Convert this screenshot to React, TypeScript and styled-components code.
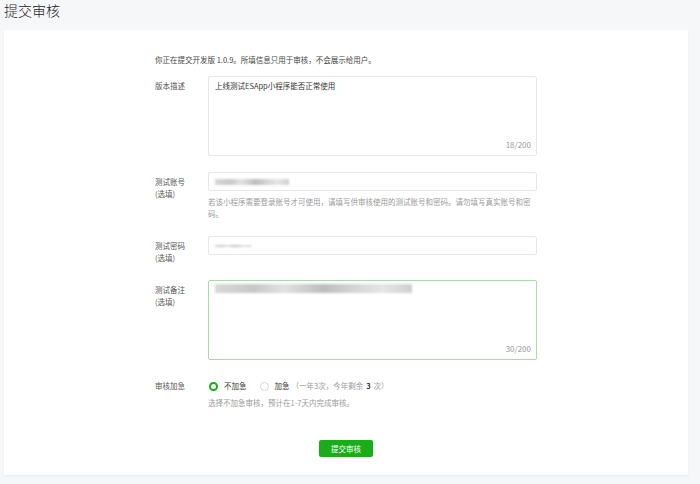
import React from "react";
import styled, { createGlobalStyle } from "styled-components";

const GlobalStyle = createGlobalStyle`
  html, body {
    margin: 0;
    padding: 0;
    background: #f6f7f9;
  }
  body {
    font-family: "Noto Sans CJK SC", "Liberation Sans", sans-serif;
    color: #353535;
  }
`;

const Page = styled.div`
  width: 700px;
  height: 484px;
  box-sizing: border-box;
  padding: 0 12px 9px 4px;
  display: flex;
  flex-direction: column;
`;

const Title = styled.h2`
  margin: 0;
  height: 30px;
  line-height: 21px;
  font-size: 14px;
  font-weight: 300;
  color: #222;
`;

const Card = styled.div`
  flex: 1;
  background: #fff;
  box-shadow: 0 1px 2px rgba(0, 0, 0, 0.06);
  padding: 24px 0 16px 151px;
  box-sizing: border-box;
  font-size: 7.5px;
`;

const Intro = styled.p`
  margin: 0 0 10px;
  line-height: 12px;
  color: #454545;
`;

const Row = styled.div`
  display: flex;
  margin-bottom: 16px;
`;

const Label = styled.div`
  width: 53px;
  flex-shrink: 0;
  padding-top: 4px;
  line-height: 12px;
  color: #555;
`;

const Field = styled.div`
  width: 329px;
`;

const TextArea = styled.div<{ $focus?: boolean }>`
  position: relative;
  height: 80px;
  box-sizing: border-box;
  border: 1px solid ${(p) => (p.$focus ? "#a9dba9" : "#e7e7eb")};
  border-radius: 2px;
  padding: 3px 6px;
  line-height: 12px;
  color: #353535;
`;

const Counter = styled.span`
  position: absolute;
  right: 5px;
  bottom: 4px;
  line-height: 12px;
  font-size: 8px;
  color: #9a9a9a;
`;

const Input = styled.div`
  height: 19px;
  box-sizing: border-box;
  border: 1px solid #e7e7eb;
  border-radius: 2px;
  padding: 0 6px;
  display: flex;
  align-items: center;
`;

// blurred out private text
const Blur = styled.span<{ $w: number; $h?: number }>`
  display: inline-block;
  width: ${(p) => p.$w}px;
  height: ${(p) => p.$h || 6}px;
  background: linear-gradient(
    90deg,
    #d8d8d8 0%,
    #c8c8c8 20%,
    #e2e2e2 35%,
    #bdbdbd 55%,
    #d4d4d4 70%,
    #e6e6e6 85%,
    #cfcfcf 100%
  );
  filter: blur(0.8px);
`;

const Hint = styled.p`
  margin: 5px 0 0;
  line-height: 12px;
  color: #9a9a9a;
`;

const RadioGroup = styled.div`
  display: flex;
  align-items: center;
  padding-top: 4px;
  line-height: 12px;
`;

const RadioItem = styled.label`
  display: flex;
  align-items: center;
  margin-right: 12px;
  color: #353535;
`;

const RadioDot = styled.span<{ $on?: boolean }>`
  width: 9px;
  height: 9px;
  box-sizing: border-box;
  border-radius: 50%;
  border: ${(p) => (p.$on ? "2.5px solid #1aad19" : "1px solid #d6d6d6")};
  margin: 0 6px 0 1px;
`;

const Note = styled.span`
  color: #9a9a9a;
  margin-left: 2px;
  b {
    color: #353535;
    margin: 0 3px;
  }
`;

const Footer = styled.div`
  display: flex;
  padding-left: 164px;
  margin-top: 31px;
`;

const Button = styled.button`
  width: 54px;
  height: 17px;
  border: none;
  border-radius: 2px;
  background: #1aad19;
  color: #fff;
  font-family: inherit;
  font-size: 7.5px;
  padding: 0;
  cursor: pointer;
`;

export default function App() {
  return (
    <Page>
      <GlobalStyle />
      <Title>提交审核</Title>
      <Card>
        <Intro>你正在提交开发版 1.0.9。所填信息只用于审核，不会展示给用户。</Intro>
        <Row>
          <Label>版本描述</Label>
          <Field>
            <TextArea>
              上线测试ESApp小程序能否正常使用
              <Counter>18/200</Counter>
            </TextArea>
          </Field>
        </Row>
        <Row>
          <Label>
            测试账号
            <br />
            (选填)
          </Label>
          <Field>
            <Input>
              <Blur $w={74} />
            </Input>
            <Hint>若该小程序需要登录账号才可使用，请填写供审核使用的测试账号和密码。请勿填写真实账号和密码。</Hint>
          </Field>
        </Row>
        <Row>
          <Label>
            测试密码
            <br />
            (选填)
          </Label>
          <Field>
            <Input>
              <Blur $w={36} $h={2} />
            </Input>
          </Field>
        </Row>
        <Row>
          <Label>
            测试备注
            <br />
            (选填)
          </Label>
          <Field>
            <TextArea $focus>
              <Blur $w={197} $h={9} />
              <Counter>30/200</Counter>
            </TextArea>
          </Field>
        </Row>
        <Row>
          <Label>审核加急</Label>
          <Field>
            <RadioGroup>
              <RadioItem>
                <RadioDot $on />
                不加急
              </RadioItem>
              <RadioItem>
                <RadioDot />
                加急
                <Note>
                  （一年3次，今年剩余<b>3</b>次）
                </Note>
              </RadioItem>
            </RadioGroup>
            <Hint>选择不加急审核，预计在1-7天内完成审核。</Hint>
          </Field>
        </Row>
        <Footer>
          <Button>提交审核</Button>
        </Footer>
      </Card>
    </Page>
  );
}
